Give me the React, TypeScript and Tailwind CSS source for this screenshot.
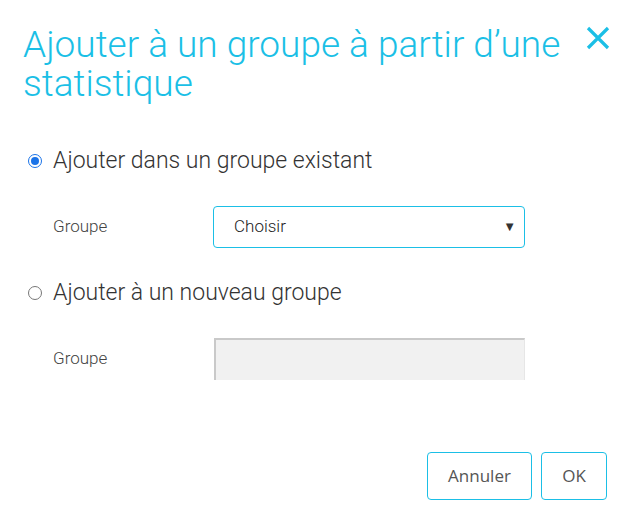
import React from "react";

export default function App() {
  return (
    <div className="w-[630px] h-[524px] bg-white relative" style={{ fontFamily: "Roboto, sans-serif" }}>
      <div className="flex items-start justify-between pl-[23px] pr-[20px] pt-[25px]">
        <h1 className="text-[37px] leading-[39px] font-light text-[#1bbfe6] w-[560px]">
          Ajouter à un groupe à partir d’une statistique
        </h1>
        <svg width="24" height="24" viewBox="0 0 24 24" className="mt-[1px]">
          <path d="M2 2 L22 22 M22 2 L2 22" stroke="#1bbfe6" strokeWidth="3.2" fill="none" />
        </svg>
      </div>

      <div className="pl-[28px] pt-[41px]">
        <label className="flex items-center gap-[11px]">
          <span className="w-[14px] h-[14px] rounded-full border-[1.5px] border-[#1a73e8] flex items-center justify-center">
            <span className="w-[8px] h-[8px] rounded-full bg-[#1a73e8]" />
          </span>
          <span className="text-[23px] font-light text-[#333]">Ajouter dans un groupe existant</span>
        </label>
        <div className="flex items-center pl-[25px] mt-[27px]">
          <span className="w-[160px] text-[17px] font-[350] text-[#444]">Groupe</span>
          <div className="w-[312px] h-[42px] border border-[#1bbfe6] rounded-[4px] flex items-center justify-between pl-[20px] pr-[8px]">
            <span className="text-[17px] font-[350] text-[#222]">Choisir</span>
            <span className="text-[13px] text-[#333]">▼</span>
          </div>
        </div>

        <label className="flex items-center gap-[11px] mt-[28px]">
          <span className="w-[14px] h-[14px] rounded-full border border-[#777]" />
          <span className="text-[23px] font-light text-[#333]">Ajouter à un nouveau groupe</span>
        </label>
        <div className="flex items-center pl-[25px] mt-[28px]">
          <span className="w-[161px] text-[17px] font-[350] text-[#444]">Groupe</span>
          <div className="w-[311px] h-[42px] bg-[#f1f1f1] border-t-2 border-l-2 border-[#c9c9c9] border-r border-r-[#e6e6e6]" />
        </div>
      </div>

      <div className="absolute right-[23px] bottom-[24px] flex gap-[9px]" style={{ fontFamily: "'Open Sans', sans-serif" }}>
        <button className="w-[105px] h-[48px] border border-[#1bbfe6] rounded-[4px] text-[17px] text-[#555] bg-white">Annuler</button>
        <button className="w-[66px] h-[48px] border border-[#1bbfe6] rounded-[4px] text-[17px] text-[#555] bg-white">OK</button>
      </div>
    </div>
  );
}
